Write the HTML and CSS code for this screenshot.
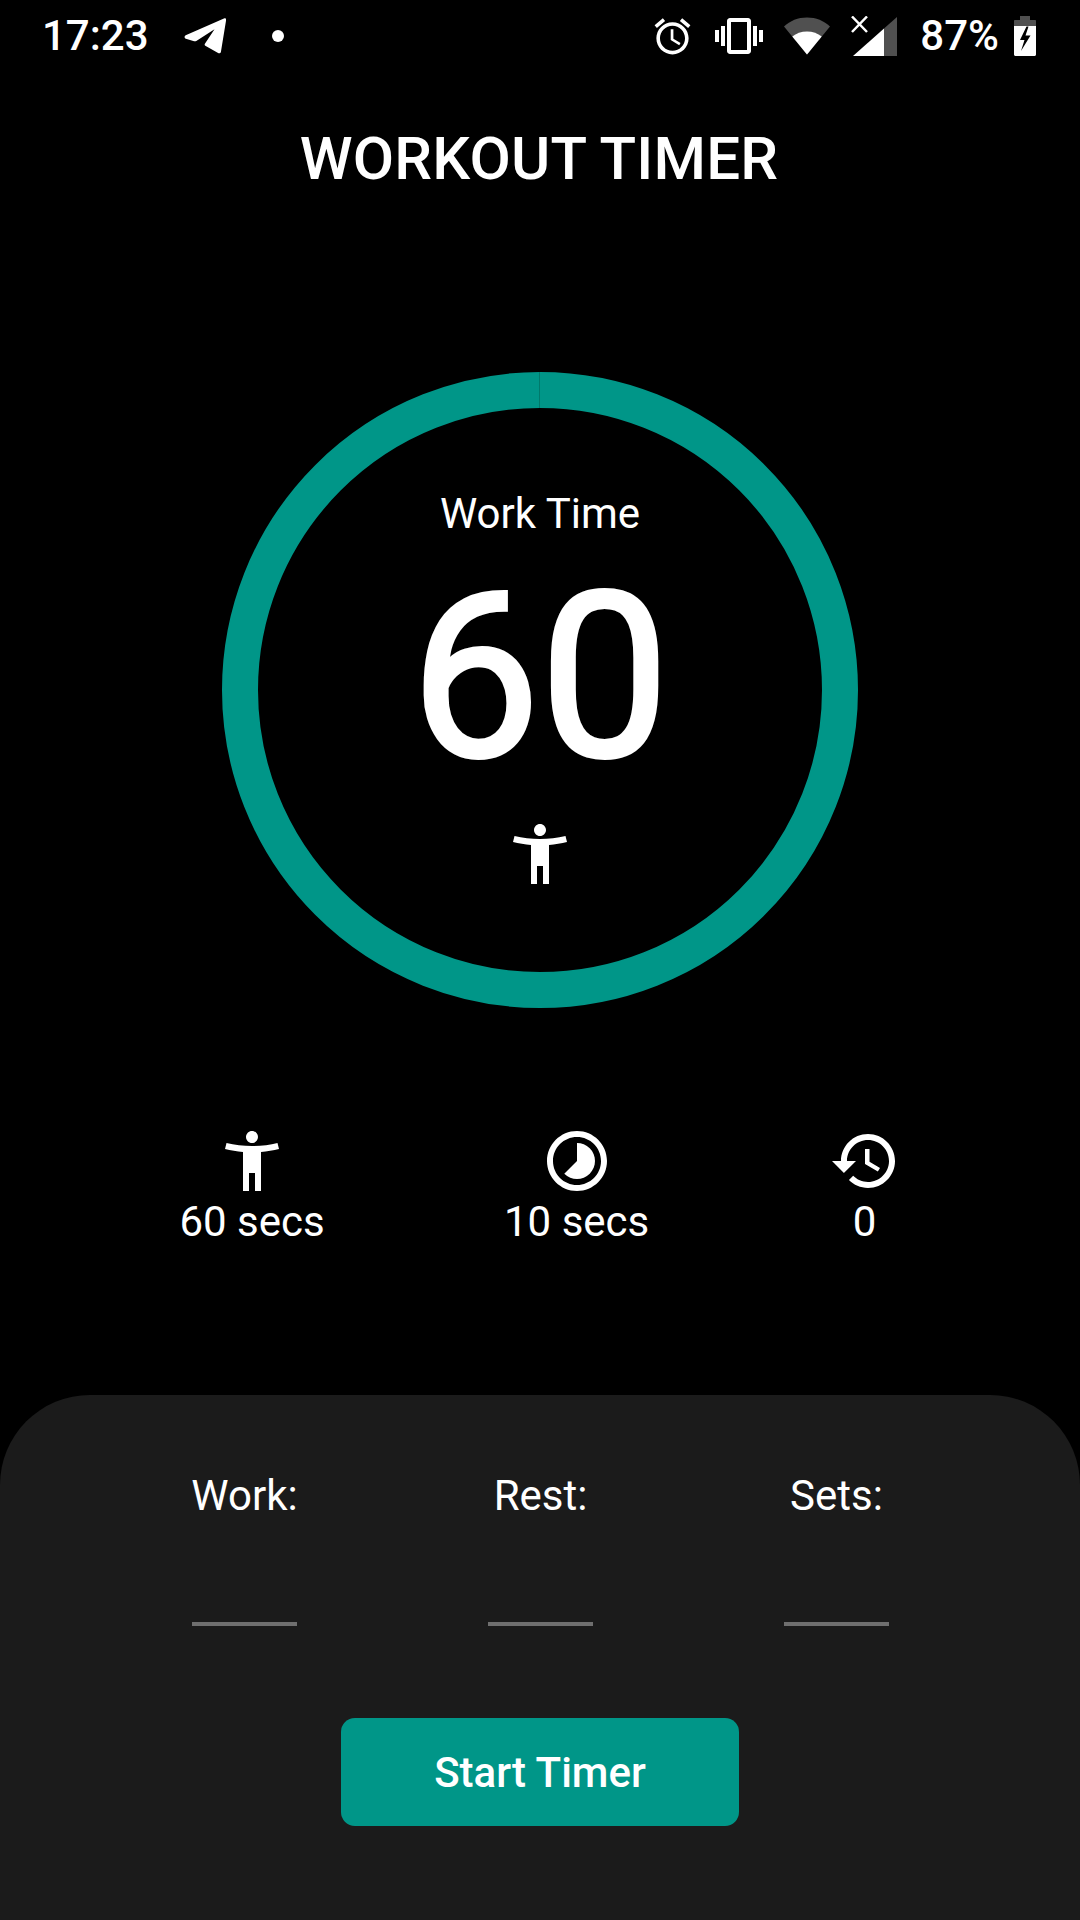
FILE: index.html
```html
<!DOCTYPE html>
<html lang="en">
<head>
  <meta charset="UTF-8">
  <meta name="viewport" content="width=device-width, initial-scale=1.0">
  <title>Workout Timer</title>
  <link rel="stylesheet" href="styles.css">
</head>
<body>
  <div class="status-bar">
    <div class="status-left">
      <span class="clock">17:23</span>
      <svg class="icon-plane" viewBox="0 0 42 36"><path fill="#fff" d="M40.5 0.3c0.9-0.4 1.8 0.3 1.7 1.2l-5.3 32.4c-0.2 1.2-1.6 1.8-2.8 1.2l-12.8-7.4c-0.7-0.4-0.9-1.4-0.4-2l9.600-14.500-18.200 11.700c-0.700 0.400-1.500 0.500-2.200 0.300l-8.200-2.500c-1.700-0.500-1.800-2.700-0.200-3.400z"/></svg>
      <span class="dot"></span>
    </div>
    <div class="status-right">
      <svg class="icon-alarm" viewBox="0 0 24 24"><path fill="#fff" d="M22 5.720l-4.600-3.860-1.290 1.530 4.600 3.860L22 5.720zM7.880 3.390L6.600 1.860 2 5.710l1.290 1.530 4.590-3.850zM12.500 8H11v6l4.750 2.850.75-1.230-4-2.370V8zM12 4c-4.970 0-9 4.030-9 9s4.030 9 9 9 9-4.030 9-9-4.030-9-9-9zm0 16c-3.870 0-7-3.130-7-7s3.130-7 7-7 7 3.130 7 7-3.130 7-7 7z"/></svg>
      <svg class="icon-vibrate" viewBox="0 0 24 24"><path fill="#fff" d="M0 15h2V9H0v6zm3 2h2V7H3v10zm19-8v6h2V9h-2zm-3 8h2V7h-2v10zM16.500 3h-9C6.670 3 6 3.670 6 4.500v15c0 .83.67 1.500 1.500 1.500h9c.83 0 1.500-.67 1.500-1.500v-15c0-.83-.67-1.500-1.500-1.500zM16 19H8V5h8v14z"/></svg>
      <svg class="icon-wifi" viewBox="0 0 46 38">
        <path fill="#505050" d="M0 9.500C6 3.800 14 0.500 23 0.500S40 3.800 46 9.500L23 37.500z"/>
        <path fill="#fff" d="M8.300 19.600C12.200 16.400 17.300 14.500 23 14.500s10.800 1.900 14.700 5.100L23 37.500z"/>
      </svg>
      <svg class="icon-signal" viewBox="0 0 46 40">
        <path fill="#505050" d="M46 1v39H33V12.500z"/>
        <path fill="#fff" d="M33 12.500V40H2z"/>
        <path fill="none" stroke="#fff" stroke-width="2.500" d="M1 .5l15 15.500M16 .5L1 16"/>
      </svg>
      <span class="battery-text">87%</span>
      <svg class="icon-battery" viewBox="0 0 22 40">
        <path fill="#505050" d="M6 0h10v4h5c.6 0 1 .4 1 1v5H0V5c0-.6.4-1 1-1h5z"/>
        <path fill="#fff" d="M0 10h22v28.500c0 .8-.7 1.500-1.500 1.500h-19C.7 40 0 39.300 0 38.500z"/>
        <path fill="#000" d="M12.500 10.500L6 24h4.500L7 35l9.500-15.500h-5l3-9z"/>
      </svg>
    </div>
  </div>

  <h1 class="title">WORKOUT TIMER</h1>

  <div class="ring">
    <div class="ring-label">Work Time</div>
    <div class="ring-count">60</div>
    <svg class="icon-big" viewBox="0 0 24 24"><use href="#person"/></svg>
  </div>

  <div class="stats">
    <div class="stat">
      <svg class="icon-big" viewBox="0 0 24 24"><path id="person" fill="#fff" d="M20.500 6c-2.610.7-5.670 1-8.500 1s-5.890-.3-8.500-1L3 8c1.860.5 4 .83 6 1v13h2v-6h2v6h2V9c2-.17 4.140-.5 6-1l-.5-2zM12 6c1.100 0 2-.9 2-2s-.9-2-2-2-2 .9-2 2 .9 2 2 2z"/></svg>
      <span class="stat-text">60 secs</span>
    </div>
    <div class="stat">
      <svg class="icon-big" viewBox="0 0 24 24"><path fill="#fff" d="M16.240 7.760C15.070 6.590 13.540 6 12 6v6l-4.240 4.240c2.340 2.340 6.140 2.340 8.490 0 2.340-2.340 2.340-6.140-.01-8.480zM12 2C6.480 2 2 6.480 2 12s4.480 10 10 10 10-4.480 10-10S17.520 2 12 2zm0 18c-4.420 0-8-3.580-8-8s3.580-8 8-8 8 3.580 8 8-3.580 8-8 8z"/></svg>
      <span class="stat-text">10 secs</span>
    </div>
    <div class="stat">
      <svg class="icon-big" viewBox="0 0 24 24"><path fill="#fff" d="M13 3c-4.970 0-9 4.030-9 9H1l3.890 3.890.07.14L9 12H6c0-3.870 3.130-7 7-7s7 3.130 7 7-3.130 7-7 7c-1.930 0-3.680-.79-4.940-2.060l-1.420 1.420C8.270 19.990 10.510 21 13 21c4.970 0 9-4.030 9-9s-4.030-9-9-9zm-1 5v5l4.280 2.540.72-1.210-3.500-2.080V8H12z"/></svg>
      <span class="stat-text">0</span>
    </div>
  </div>

  <div class="sheet">
    <div class="fields">
      <div class="field">
        <label class="field-label">Work:</label>
        <span class="field-line"></span>
      </div>
      <div class="field">
        <label class="field-label">Rest:</label>
        <span class="field-line"></span>
      </div>
      <div class="field">
        <label class="field-label">Sets:</label>
        <span class="field-line"></span>
      </div>
    </div>
    <button class="start-btn">Start Timer</button>
  </div>
</body>
</html>
```

FILE: styles.css
```css
html, body {
  margin: 0;
  padding: 0;
}

body {
  width: 1080px;
  height: 1920px;
  background-color: #000;
  color: #fff;
  font-family: Roboto, "Liberation Sans", sans-serif;
  display: flex;
  flex-direction: column;
  overflow: hidden;
}

svg {
  display: block;
  flex-shrink: 0;
}

/* status bar */
.status-bar {
  height: 72px;
  display: flex;
  justify-content: space-between;
  align-items: center;
  padding: 0 44px 0 42px;
}

.status-left, .status-right {
  display: flex;
  align-items: center;
}

.clock, .battery-text {
  font-size: 42px;
  font-weight: 500;
  line-height: 72px;
}

.icon-plane {
  width: 42px;
  height: 36px;
  margin-left: 35px;
}

.dot {
  width: 12px;
  height: 12px;
  border-radius: 50%;
  background-color: #fff;
  margin-left: 46px;
}

.icon-alarm {
  width: 43px;
  height: 43px;
}

.icon-vibrate {
  width: 48px;
  height: 48px;
  margin-left: 21px;
}

.icon-wifi {
  width: 46px;
  height: 38px;
  margin-left: 21px;
}

.icon-signal {
  width: 46px;
  height: 40px;
  margin-left: 21px;
}

.battery-text {
  margin-left: 23px;
}

.icon-battery {
  width: 22px;
  height: 40px;
  margin-left: 15px;
}

.title {
  margin: 49px 0 0;
  padding-right: 2px;
  font-size: 60px;
  line-height: 76px;
  font-weight: 500;
  letter-spacing: 0.2px;
  text-align: center;
}

/* timer ring */
.ring {
  position: relative;
  box-sizing: border-box;
  width: 636px;
  height: 636px;
  margin: 175px auto 0;
  border: 36px solid #009688;
  border-radius: 50%;
  display: flex;
  flex-direction: column;
  align-items: center;
}

.ring::before {
  content: "";
  position: absolute;
  top: -36px;
  left: 281px;
  width: 1px;
  height: 36px;
  background-color: #00796b;
}

.ring-label {
  margin-top: 81px;
  font-size: 42px;
  line-height: 50px;
}

.ring-count {
  margin-top: 39px;
  font-size: 230px;
  line-height: 200px;
  -webkit-text-stroke: 4px #fff;
}

.icon-big {
  width: 72px;
  height: 72px;
}

.ring .icon-big {
  margin-top: 40px;
}

/* stats row */
.stats {
  display: flex;
  justify-content: space-evenly;
  margin-top: 117px;
}

.stat {
  display: flex;
  flex-direction: column;
  align-items: center;
}

.stat-text {
  font-size: 42px;
  line-height: 50px;
}

/* bottom sheet */
.sheet {
  margin-top: auto;
  height: 525px;
  background-color: #1b1b1b;
  border-radius: 90px 90px 0 0;
  display: flex;
  flex-direction: column;
  align-items: center;
}

.fields {
  display: grid;
  grid-template-columns: repeat(3, 296px);
  margin: 76px 0 0 1px;
}

.field {
  display: flex;
  flex-direction: column;
  align-items: center;
}

.field-label {
  font-size: 42px;
  line-height: 50px;
}

.field-line {
  width: 105px;
  height: 4px;
  margin-top: 101px;
  background-color: #6f6f6f;
}

.start-btn {
  width: 398px;
  height: 108px;
  margin-top: 92px;
  border: none;
  border-radius: 14px;
  background-color: #009688;
  color: #fff;
  font-family: Roboto, "Liberation Sans", sans-serif;
  font-size: 42px;
  font-weight: 500;
}
```
